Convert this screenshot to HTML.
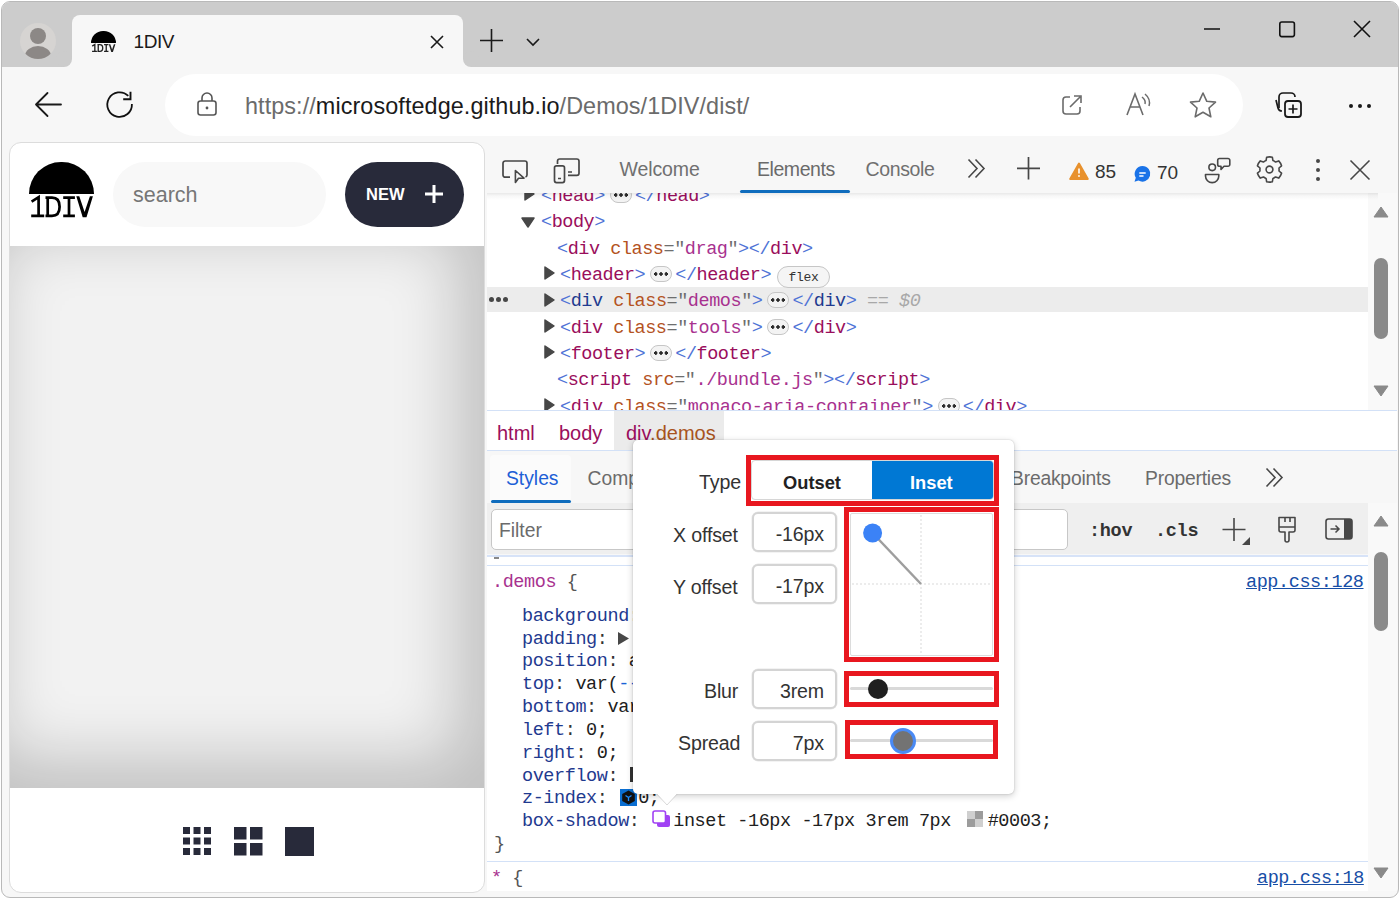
<!DOCTYPE html>
<html><head><meta charset="utf-8">
<style>
*{box-sizing:border-box;margin:0;padding:0}
html,body{width:1400px;height:899px;overflow:hidden;background:#fff;font-family:"Liberation Sans",sans-serif}
.a{position:absolute}
#win{position:absolute;left:1px;top:1px;width:1398px;height:897px;background:#f7f7f7;border:1px solid #b9b9b9;border-radius:9px;overflow:hidden}
#strip{position:absolute;left:0;top:0;width:1398px;height:65px;background:#cccccc}
.mono{font-family:"Liberation Mono",monospace}
svg{position:absolute;overflow:visible}

#dom>div{white-space:pre;height:26.35px}
.br{color:#4f73d6}.an{color:#b4531f}.eq{color:#6e6e6e}.av{color:#a8328f}
.ell{display:inline-block;width:22px;height:16px;margin:0 3px 0 5px;border:1px solid #c6c6c6;border-radius:8px;background:radial-gradient(circle at 4.8px 7px,#2b2b2b 1.5px,transparent 1.9px),radial-gradient(circle at 10px 7px,#2b2b2b 1.5px,transparent 1.9px),radial-gradient(circle at 15.2px 7px,#2b2b2b 1.5px,transparent 1.9px),#f3f3f3;vertical-align:-2px}
.flex{display:inline-block;width:53px;height:22px;text-align:center;font-size:13px;letter-spacing:-0.3px;line-height:21px;margin-left:6px;border:1.5px solid #c6c6c6;border-radius:11px;color:#333;vertical-align:-1px;background:#f5f5f5}

#css>div{white-space:pre;height:22.82px}
#css .p{padding-left:35px;color:#202020}
#css .pn{color:#1f3a8f}
#css .p .c{color:#333}

.inp{left:752px;width:85px;height:40px;border:2px solid #d4d4d4;border-radius:6px;background:#fff;font-size:19.6px;letter-spacing:-0.15px;color:#333;text-align:right;padding:9px 11px 0 0;box-shadow:0 0 0 0.5px #e8e8e8}
.red{border:5px solid #e8171f}
</style></head><body>
<div id="win">
  <div id="strip"></div>
</div>
<!-- absolute layer using page coords -->
<div class="a" style="left:0;top:0;width:1400px;height:899px">
  <!-- profile avatar -->
  <div class="a" style="left:20px;top:23px;width:36px;height:36px;border-radius:50%;background:#d6d4d2;overflow:hidden">
    <div class="a" style="left:10px;top:5px;width:16px;height:16px;border-radius:50%;background:#8c8886"></div>
    <div class="a" style="left:5px;top:23px;width:26px;height:20px;border-radius:50%;background:#8c8886"></div>
  </div>
  <!-- active tab -->
  <div class="a" style="left:72px;top:15px;width:391px;height:53px;background:#f7f7f7;border-radius:8px 8px 0 0"></div>
  <div class="a" style="left:64px;top:59px;width:8px;height:8px;background:#f7f7f7"></div>
  <div class="a" style="left:56px;top:51px;width:16px;height:16px;border-radius:50%;background:#cccccc"></div>
  <div class="a" style="left:463px;top:59px;width:8px;height:8px;background:#f7f7f7"></div>
  <div class="a" style="left:463px;top:51px;width:16px;height:16px;border-radius:50%;background:#cccccc"></div>
  <!-- favicon -->
  <div class="a" style="left:91px;top:31px;width:24.6px;height:12px;background:#000;border-radius:12.3px 12.3px 0 0"></div>
  <svg style="left:0;top:0" width="130" height="60"><g transform="translate(80.36,-27.83) scale(0.375,0.367)"><g stroke="#222" stroke-width="3.6" fill="none">
    <path d="M31.6 201.6L38.6 197.2V216.5M31.2 215.8H44.2"/>
    <path d="M45.5 197.6H52C57.8 197.6 59.6 201.5 59.6 206.7C59.6 211.8 57.8 215.8 52 215.8H45.5M47.7 197.6V215.8"/>
    <path d="M63.2 197.6H74.9M63.2 215.8H74.9M69 197.6V215.8"/>
  </g><path d="M75.8 196.3H79.8L84.6 211L89.4 196.3H93.4L86.8 217.2H82.4Z" fill="#222"/></g></svg>
  <div class="a" style="left:133.5px;top:30.5px;font-size:19px;letter-spacing:-0.4px;color:#1a1a1a">1DIV</div>
  <!-- tab close -->
  <svg style="left:430px;top:35px" width="14" height="14"><path d="M1 1L13 13M13 1L1 13" stroke="#1a1a1a" stroke-width="1.6"/></svg>
  <!-- new tab + -->
  <svg style="left:480px;top:29px" width="23" height="23"><path d="M11.5 0V23M0 11.5H23" stroke="#1a1a1a" stroke-width="1.6"/></svg>
  <svg style="left:526px;top:38px" width="14" height="9"><path d="M1 1L7 7L13 1" stroke="#1a1a1a" stroke-width="1.6" fill="none"/></svg>
  <!-- window controls -->
  <svg style="left:1204px;top:28px" width="17" height="2"><path d="M0 1H16" stroke="#111" stroke-width="1.5"/></svg>
  <svg style="left:1278px;top:20px" width="18" height="18"><rect x="1.8" y="2" width="14.6" height="14.6" rx="2" stroke="#111" stroke-width="1.6" fill="none"/></svg>
  <svg style="left:1353px;top:20px" width="19" height="19"><path d="M1 1L17 17M17 1L1 17" stroke="#111" stroke-width="1.6"/></svg>

  <!-- toolbar -->
  <svg style="left:35px;top:92px" width="27" height="25"><path d="M1 12.5H26M1 12.5L12.5 1M1 12.5L12.5 24" stroke="#1a1a1a" stroke-width="1.8" fill="none" stroke-linecap="round"/></svg>
  <svg style="left:100px;top:85px" width="40" height="40"><path d="M31.9 19A12.3 12.3 0 1 1 28.3 10.9" stroke="#111" stroke-width="1.8" fill="none"/><path d="M30.5 6.8V14.3H23.2" stroke="#111" stroke-width="1.9" fill="none"/></svg>
  <div class="a" style="left:165px;top:74px;width:1078px;height:62px;background:#fff;border-radius:31px"></div>
  <svg style="left:196px;top:91px" width="22" height="26"><path d="M6 10V7A5 5 0 0 1 16 7V10" stroke="#555" stroke-width="1.6" fill="none"/><rect x="2" y="10" width="18" height="14" rx="2.5" stroke="#555" stroke-width="1.6" fill="none"/><circle cx="11" cy="17" r="1.4" fill="#555"/></svg>
  <div class="a" style="left:245px;top:92.5px;font-size:23.4px;color:#1a1a1a;white-space:nowrap;letter-spacing:0.08px"><span style="color:#6b6b6b">https://</span>microsoftedge.github.io<span style="color:#6b6b6b">/Demos/1DIV/dist/</span></div>
  <!-- address icons -->
  <svg style="left:1061px;top:94px" width="22" height="22"><path d="M9 3H5A3 3 0 0 0 2 6V17A3 3 0 0 0 5 20H16A3 3 0 0 0 19 17V13" stroke="#6b6b6b" stroke-width="1.6" fill="none"/><path d="M9 13L19 3M13 2H20V9" stroke="#6b6b6b" stroke-width="1.6" fill="none"/></svg>
  <svg style="left:1125px;top:91px" width="28" height="26"><path d="M2 24L10 3L18 24M5.5 16H14.5" stroke="#6b6b6b" stroke-width="1.6" fill="none"/><path d="M17 6Q21 9 20 13M20 3Q26 8 24 15" stroke="#6b6b6b" stroke-width="1.5" fill="none"/></svg>
  <svg style="left:1188px;top:91px" width="30" height="28"><path d="M15 2L18.8 10.3L27.5 11.1L21 17L22.8 25.8L15 21.3L7.2 25.8L9 17L2.5 11.1L11.2 10.3Z" stroke="#6b6b6b" stroke-width="1.6" fill="none" stroke-linejoin="round"/></svg>
  <svg style="left:1274px;top:91px" width="30" height="29"><path d="M5 17V6A4 4 0 0 1 9 2H17A4 4 0 0 1 21 6" stroke="#1a1a1a" stroke-width="1.7" fill="none"/><path d="M2 9L4 17A4 4 0 0 0 8 20" stroke="#1a1a1a" stroke-width="1.7" fill="none"/><rect x="11" y="10" width="16" height="16" rx="3" stroke="#1a1a1a" stroke-width="1.8" fill="none"/><path d="M19 13.5V22.5M14.5 18H23.5" stroke="#1a1a1a" stroke-width="1.7"/></svg>
  <div class="a" style="left:1349px;top:104px;width:4px;height:4px;border-radius:2px;background:#1a1a1a"></div>
  <div class="a" style="left:1358px;top:104px;width:4px;height:4px;border-radius:2px;background:#1a1a1a"></div>
  <div class="a" style="left:1367px;top:104px;width:4px;height:4px;border-radius:2px;background:#1a1a1a"></div>

  <!-- PAGE PANEL -->
  <div class="a" style="left:9px;top:142px;width:476px;height:751px;background:#fff;border:1px solid #dcdcdc;border-radius:12px;overflow:hidden">
    <div class="a" style="left:-1px;top:103px;width:476px;height:542px;background:#f2f2f2;box-shadow:inset -20px -21px 64px 9px rgba(0,0,0,.2)"></div>
  </div>
  <div class="a" style="left:28.5px;top:161.5px;width:65px;height:32.5px;background:#000;border-radius:32.5px 32.5px 0 0"></div>
  <svg style="left:0;top:0" width="100" height="230"><g stroke="#000" stroke-width="2.7" fill="none" stroke-linecap="butt">
    <path d="M31.6 201.6L38.6 197.2V216.5M31.2 215.8H44.2"/>
    <path d="M45.5 197.6H52C57.8 197.6 59.6 201.5 59.6 206.7C59.6 211.8 57.8 215.8 52 215.8H45.5M47.7 197.6V215.8"/>
    <path d="M63.2 197.6H74.9M63.2 215.8H74.9M69 197.6V215.8"/>
  </g><path d="M76.3 196.3H79.3L84.6 212L89.9 196.3H92.9L86.5 217.2H82.7Z" fill="#000"/></svg>
  <div class="a" style="left:113px;top:162px;width:213px;height:65px;background:#f8f8f8;border-radius:33px"></div>
  <div class="a" style="left:133px;top:183px;font-size:21.5px;color:#767676">search</div>
  <div class="a" style="left:345px;top:162px;width:119px;height:65px;background:#282a3a;border-radius:33px"></div>
  <div class="a" style="left:366px;top:185px;font-size:16.5px;font-weight:bold;color:#fff">NEW</div>
  <svg style="left:425px;top:185px" width="18" height="18"><path d="M9 0V18M0 9H18" stroke="#fff" stroke-width="3"/></svg>
  <!-- grid icons -->
  <svg style="left:183px;top:827px" width="132" height="29">
    <g fill="#282a3a">
      <rect x="0" y="0" width="7" height="7"/><rect x="10.5" y="0" width="7" height="7"/><rect x="21" y="0" width="7" height="7"/>
      <rect x="0" y="10.5" width="7" height="7"/><rect x="10.5" y="10.5" width="7" height="7"/><rect x="21" y="10.5" width="7" height="7"/>
      <rect x="0" y="21" width="7" height="7"/><rect x="10.5" y="21" width="7" height="7"/><rect x="21" y="21" width="7" height="7"/>
      <rect x="51" y="0" width="12.5" height="12.5"/><rect x="67" y="0" width="12.5" height="12.5"/>
      <rect x="51" y="16" width="12.5" height="12.5"/><rect x="67" y="16" width="12.5" height="12.5"/>
      <rect x="102" y="0" width="29" height="29"/>
    </g>
  </svg>

  <!-- DEVTOOLS -->
  <div class="a" style="left:487px;top:193px;width:881px;height:218px;background:#fff"></div>
  <div class="a" style="left:1368px;top:193px;width:29px;height:218px;background:#f9f9f9"></div>
  <!-- DOM tree -->
  <div class="a" style="left:487px;top:287px;width:881px;height:25px;background:#ececec"></div>
  <div class="a mono" id="dom" style="left:487px;top:184px;width:881px;font-size:18.5px;letter-spacing:-0.45px;line-height:26.35px;color:#9a0e5c">
    <div style="padding-left:54px"><span class="br">&lt;</span>head<span class="br">&gt;</span><span class="ell"></span><span class="br">&lt;/</span>head<span class="br">&gt;</span></div>
    <div style="padding-left:54px"><span class="br">&lt;</span>body<span class="br">&gt;</span></div>
    <div style="padding-left:70px"><span class="br">&lt;</span>div <span class="an">class</span><span class="eq">="</span><span class="av">drag</span><span class="eq">"</span><span class="br">&gt;&lt;/</span>div<span class="br">&gt;</span></div>
    <div style="padding-left:73px"><span class="br">&lt;</span>header<span class="br">&gt;</span><span class="ell"></span><span class="br">&lt;/</span>header<span class="br">&gt;</span><span class="flex">flex</span></div>
    <div style="padding-left:73px"><span class="br">&lt;</span><span style="color:#1f3a8f">div</span> <span class="an">class</span><span class="eq">="</span><span class="av">demos</span><span class="eq">"</span><span class="br">&gt;</span><span class="ell"></span><span class="br">&lt;/</span><span style="color:#1f3a8f">div</span><span class="br">&gt;</span> <span style="color:#a8a8a8;font-style:italic">== $0</span></div>
    <div style="padding-left:73px"><span class="br">&lt;</span>div <span class="an">class</span><span class="eq">="</span><span class="av">tools</span><span class="eq">"</span><span class="br">&gt;</span><span class="ell"></span><span class="br">&lt;/</span>div<span class="br">&gt;</span></div>
    <div style="padding-left:73px"><span class="br">&lt;</span>footer<span class="br">&gt;</span><span class="ell"></span><span class="br">&lt;/</span>footer<span class="br">&gt;</span></div>
    <div style="padding-left:70px"><span class="br">&lt;</span>script <span class="an">src</span><span class="eq">="</span><span class="av">./bundle.js</span><span class="eq">"</span><span class="br">&gt;&lt;/</span>script<span class="br">&gt;</span></div>
    <div style="padding-left:73px"><span class="br">&lt;</span>div <span class="an">class</span><span class="eq">="</span><span class="av">monaco-aria-container</span><span class="eq">"</span><span class="br">&gt;</span><span class="ell"></span><span class="br">&lt;/</span>div<span class="br">&gt;</span></div>
  </div>
  <!-- triangles -->
  <svg style="left:524px;top:187px" width="11" height="14"><path d="M1 1V13L10 7Z" fill="#474747" stroke="#474747" stroke-width="1.5" stroke-linejoin="round"/></svg>
  <svg style="left:521px;top:216.5px" width="14" height="11"><path d="M1 1H13L7 10Z" fill="#474747" stroke="#474747" stroke-width="1.5" stroke-linejoin="round"/></svg>
  <svg style="left:543.5px;top:266.3px" width="11" height="14"><path d="M1 1V13L10 7Z" fill="#474747" stroke="#474747" stroke-width="1.5" stroke-linejoin="round"/></svg>
  <svg style="left:543.5px;top:292.7px" width="11" height="14"><path d="M1 1V13L10 7Z" fill="#474747" stroke="#474747" stroke-width="1.5" stroke-linejoin="round"/></svg>
  <svg style="left:543.5px;top:319px" width="11" height="14"><path d="M1 1V13L10 7Z" fill="#474747" stroke="#474747" stroke-width="1.5" stroke-linejoin="round"/></svg>
  <svg style="left:543.5px;top:345.3px" width="11" height="14"><path d="M1 1V13L10 7Z" fill="#474747" stroke="#474747" stroke-width="1.5" stroke-linejoin="round"/></svg>
  <svg style="left:543.5px;top:398px" width="11" height="14"><path d="M1 1V13L10 7Z" fill="#474747" stroke="#474747" stroke-width="1.5" stroke-linejoin="round"/></svg>
  <!-- selected row dots -->
  <div class="a" style="left:489px;top:297px;width:5px;height:5px;border-radius:50%;background:#474747"></div>
  <div class="a" style="left:496px;top:297px;width:5px;height:5px;border-radius:50%;background:#474747"></div>
  <div class="a" style="left:503px;top:297px;width:5px;height:5px;border-radius:50%;background:#474747"></div>
  <!-- dom scrollbar -->
  <svg style="left:1373px;top:206px" width="16" height="12"><path d="M1 11H15L8 1Z" fill="#8a8a8a" stroke="#8a8a8a" stroke-linejoin="round"/></svg>
  <div class="a" style="left:1374px;top:258px;width:14px;height:81px;border-radius:7px;background:#8a8a8a"></div>
  <svg style="left:1373px;top:385px" width="16" height="12"><path d="M1 1H15L8 11Z" fill="#8a8a8a" stroke="#8a8a8a" stroke-linejoin="round"/></svg>
  <div class="a" style="left:614px;top:411px;width:110px;height:4px;background:#e0e0e0"></div>

  <!-- devtools toolbar -->
  <div class="a" style="left:487px;top:142px;width:910px;height:51px;background:#f7f7f7"></div>
  <div class="a" style="left:487px;top:193px;width:891px;height:7px;background:linear-gradient(rgba(0,0,0,.09),rgba(0,0,0,.03) 40%,rgba(0,0,0,0))"></div>
  <svg style="left:502px;top:160px" width="27" height="24"><path d="M8 17.2H3.2A2.2 2.2 0 0 1 1 15V3.2A2.2 2.2 0 0 1 3.2 1H22.8A2.2 2.2 0 0 1 25 3.2V15A2.2 2.2 0 0 1 23.5 17" stroke="#474747" stroke-width="1.7" fill="none"/><path d="M13.4 10.5V22.5L16.5 18.2L22 18.2Z" stroke="#474747" stroke-width="1.6" fill="none" stroke-linejoin="round"/></svg>
  <svg style="left:553px;top:158px" width="28" height="26"><path d="M4.5 6V3.2A2.2 2.2 0 0 1 6.7 1H23.8A2.2 2.2 0 0 1 26 3.2V15.2A2.2 2.2 0 0 1 23.8 17.4H15" stroke="#474747" stroke-width="1.7" fill="none"/><rect x="1.5" y="7.8" width="10" height="16.8" rx="2" stroke="#474747" stroke-width="1.7" fill="none"/><path d="M5 20.5H8M15 14H19" stroke="#474747" stroke-width="1.6"/></svg>
  <div class="a" style="left:619.5px;top:157.5px;font-size:19.5px;letter-spacing:-0.1px;color:#707070">Welcome</div>
  <div class="a" style="left:757px;top:157.5px;font-size:19.5px;letter-spacing:-0.45px;color:#6a6a6a">Elements</div>
  <div class="a" style="left:740px;top:190px;width:110px;height:3px;background:#0f6cbd;border-radius:2px"></div>
  <div class="a" style="left:865.5px;top:157.5px;font-size:19.5px;letter-spacing:-0.35px;color:#707070">Console</div>
  <svg style="left:967px;top:158px" width="20" height="21"><path d="M1.5 1.5L10 10.5L1.5 19.5M8.5 1.5L17 10.5L8.5 19.5" stroke="#474747" stroke-width="1.6" fill="none"/></svg>
  <svg style="left:1017px;top:157px" width="23" height="23"><path d="M11.5 0V22.5M0 11.3H23" stroke="#474747" stroke-width="1.7"/></svg>
  <svg style="left:1069px;top:162px" width="20" height="19"><path d="M10 1.5L18.8 17H1.2Z" fill="#e8912d" stroke="#e8912d" stroke-width="2" stroke-linejoin="round"/><path d="M10 6.5V11.5" stroke="#fff" stroke-width="1.6"/><circle cx="10" cy="14" r="0.9" fill="#fff"/></svg>
  <div class="a" style="left:1095px;top:161px;font-size:19px;color:#333">85</div>
  <svg style="left:1133px;top:165px" width="19" height="18"><path d="M9.5 1A7.8 7.8 0 1 1 5.5 15.5L1.5 16.8L2.8 12.8A7.8 7.8 0 0 1 9.5 1Z" fill="#1a73e8"/><path d="M6.3 8H12.7M6.3 11H10.5" stroke="#fff" stroke-width="1.3"/></svg>
  <div class="a" style="left:1157px;top:162px;font-size:19px;color:#333">70</div>
  <svg style="left:1204px;top:157px" width="27" height="26"><circle cx="8.2" cy="10.3" r="3.3" stroke="#474747" stroke-width="1.6" fill="none"/><path d="M1.5 17.5H14.8V19A6.6 6.6 0 0 1 1.5 19Z" stroke="#474747" stroke-width="1.6" fill="none" stroke-linejoin="round"/><path d="M15.5 1.5H24A1.8 1.8 0 0 1 25.8 3.3V7.5A1.8 1.8 0 0 1 24 9.3H20L17 12.5V9.3H15.5A1.8 1.8 0 0 1 13.7 7.5V3.3A1.8 1.8 0 0 1 15.5 1.5Z" stroke="#474747" stroke-width="1.6" fill="none" stroke-linejoin="round"/></svg>
  <svg style="left:1254.5px;top:155px" width="29" height="29"><path d="M11.06 5.54L11.67 2.22A12.60 12.60 0 0 1 17.33 2.22L17.94 5.54A9.60 9.60 0 0 1 20.54 7.04L23.72 5.91A12.60 12.60 0 0 1 26.55 10.82L23.98 13.00A9.60 9.60 0 0 1 23.98 16.00L26.55 18.18A12.60 12.60 0 0 1 23.72 23.09L20.54 21.96A9.60 9.60 0 0 1 17.94 23.46L17.33 26.78A12.60 12.60 0 0 1 11.67 26.78L11.06 23.46A9.60 9.60 0 0 1 8.46 21.96L5.28 23.09A12.60 12.60 0 0 1 2.45 18.18L5.02 16.00A9.60 9.60 0 0 1 5.02 13.00L2.45 10.82A12.60 12.60 0 0 1 5.28 5.91L8.46 7.04A9.60 9.60 0 0 1 11.06 5.54 Z" stroke="#474747" stroke-width="1.6" fill="none" stroke-linejoin="round"/><circle cx="14.5" cy="14.5" r="3.4" stroke="#474747" stroke-width="1.6" fill="none"/></svg>
  <div class="a" style="left:1316px;top:159px;width:4px;height:4px;border-radius:50%;background:#474747"></div>
  <div class="a" style="left:1316px;top:168px;width:4px;height:4px;border-radius:50%;background:#474747"></div>
  <div class="a" style="left:1316px;top:177px;width:4px;height:4px;border-radius:50%;background:#474747"></div>
  <svg style="left:1350px;top:160px" width="20" height="20"><path d="M0.5 0.5L19.5 19.5M19.5 0.5L0.5 19.5" stroke="#474747" stroke-width="1.6"/></svg>

  <!-- breadcrumbs -->
  <div class="a" style="left:487px;top:410px;width:910px;height:1px;background:#d3e1f7"></div>
  <div class="a" style="left:487px;top:411px;width:910px;height:39px;background:#fff"></div>
  <div class="a" style="left:614px;top:411px;width:110px;height:39px;background:#ebebeb"></div>
  <div class="a" style="left:497px;top:421.5px;font-size:20px;color:#9a0e5c;white-space:nowrap">html</div>
  <div class="a" style="left:559px;top:421.5px;font-size:20px;color:#9a0e5c;white-space:nowrap">body</div>
  <div class="a" style="left:626px;top:421.5px;font-size:20px;color:#9a0e5c;white-space:nowrap">div<span style="color:#a8541e">.demos</span></div>
  <div class="a" style="left:487px;top:450px;width:910px;height:1px;background:#d3e1f7"></div>
  <!-- styles tabs -->
  <div class="a" style="left:487px;top:451px;width:910px;height:52px;background:#f7f7f7"></div>
  <div class="a" style="left:490px;top:455px;width:81px;height:48px;background:#fbfbfb;border-radius:4px 4px 0 0"></div>
  <div class="a" style="left:491px;top:500px;width:80px;height:3px;background:#0f6cbd;border-radius:2px"></div>
  <div class="a" style="left:506px;top:467.5px;font-size:19.3px;color:#1d5fd6">Styles</div>
  <div class="a" style="left:587.5px;top:467.5px;font-size:19.3px;color:#6b6b6b">Computed</div>
  <div class="a" style="left:1011px;top:468px;font-size:19.3px;letter-spacing:-0.2px;color:#6b6b6b">Breakpoints</div>
  <div class="a" style="left:1145px;top:468px;font-size:19.3px;letter-spacing:-0.2px;color:#6b6b6b">Properties</div>
  <svg style="left:1265px;top:467px" width="20" height="21"><path d="M1.5 1.5L10 10.5L1.5 19.5M8.5 1.5L17 10.5L8.5 19.5" stroke="#474747" stroke-width="1.6" fill="none"/></svg>
  <!-- filter bar -->
  <div class="a" style="left:487px;top:503px;width:881px;height:51px;background:#efefef"></div>
  <div class="a" style="left:491px;top:509px;width:577px;height:41px;background:#fff;border:1px solid #c7c7c7;border-radius:5px"></div>
  <div class="a" style="left:499px;top:520px;font-size:19.3px;color:#6b6b6b">Filter</div>
  <div class="a mono" style="left:1089px;top:520.5px;font-size:18.5px;letter-spacing:-0.3px;font-weight:bold;color:#333">:hov</div>
  <div class="a mono" style="left:1155px;top:520.5px;font-size:18.5px;letter-spacing:-0.3px;font-weight:bold;color:#333">.cls</div>
  <svg style="left:1222px;top:517px" width="30" height="29"><path d="M12 1V24M0.5 12.5H23.5" stroke="#474747" stroke-width="1.6"/><path d="M28 20V28H20Z" fill="#474747"/></svg>
  <svg style="left:1277px;top:516px" width="20" height="27"><path d="M2 1.5H18V14A2 2 0 0 1 16 16H12V24A2 2 0 0 1 8 24V16H4A2 2 0 0 1 2 14Z" stroke="#474747" stroke-width="1.6" fill="none" stroke-linejoin="round"/><path d="M2 11H18M8 1.5V6M13 1.5V6" stroke="#474747" stroke-width="1.6"/></svg>
  <svg style="left:1325px;top:518px" width="28" height="22"><rect x="1" y="1" width="26" height="20" rx="2.5" stroke="#474747" stroke-width="1.6" fill="none"/><path d="M19 1H24.5A2.5 2.5 0 0 1 27 3.5V18.5A2.5 2.5 0 0 1 24.5 21H19Z" fill="#474747"/><path d="M5.5 11H14M10.5 7.5L14 11L10.5 14.5" stroke="#474747" stroke-width="1.5" fill="none"/></svg>
  <div class="a" style="left:487px;top:555px;width:881px;height:336px;background:#fff"></div>
  <div class="a" style="left:487px;top:555px;width:881px;height:2px;background:#d7e3f8"></div>
  <div class="a" style="left:494px;top:557px;width:5px;height:1.5px;background:#888"></div>
  <div class="a" style="left:487px;top:565px;width:881px;height:1px;background:#d3e1f7"></div>
  <div class="a" style="left:487px;top:861px;width:881px;height:1px;background:#d3e1f7"></div>
  <div class="a" style="left:1368px;top:503px;width:29px;height:388px;background:#f9f9f9"></div>
  <svg style="left:1373px;top:515px" width="16" height="12"><path d="M1 11H15L8 1Z" fill="#8a8a8a" stroke="#8a8a8a" stroke-linejoin="round"/></svg>
  <div class="a" style="left:1374px;top:552px;width:14px;height:79px;border-radius:7px;background:#8a8a8a"></div>
  <svg style="left:1373px;top:867px" width="16" height="12"><path d="M1 1H15L8 11Z" fill="#8a8a8a" stroke="#8a8a8a" stroke-linejoin="round"/></svg>
  <!-- css rules -->
  <div class="a mono" id="css" style="left:487px;top:572px;width:881px;font-size:18.5px;letter-spacing:-0.42px;line-height:22.82px;color:#222">
    <div style="padding-left:5px"><span style="color:#a8328f">.demos</span> <span style="color:#555">{</span></div>
    <div style="height:11px"></div>
    <div class="p"><span class="pn">background</span><span class="c">:</span></div>
    <div class="p"><span class="pn">padding</span><span class="c">:</span> </div>
    <div class="p"><span class="pn">position</span><span class="c">:</span> a</div>
    <div class="p"><span class="pn">top</span><span class="c">:</span> var(<span style="color:#1a62d6">--</span></div>
    <div class="p"><span class="pn">bottom</span><span class="c">:</span> var</div>
    <div class="p"><span class="pn">left</span><span class="c">:</span> 0;</div>
    <div class="p"><span class="pn">right</span><span class="c">:</span> 0;</div>
    <div class="p"><span class="pn">overflow</span><span class="c">:</span> </div>
    <div class="p"><span class="pn">z-index</span><span class="c">:</span> <span style="display:inline-block;width:20px"></span>0;</div>
    <div class="p"><span class="pn">box-shadow</span><span class="c">:</span> <span style="display:inline-block;width:23px"></span>inset -16px -17px 3rem 7px <span style="display:inline-block;width:26px"></span>#0003;</div>
    <div style="padding-left:7px;color:#555">}</div>
  </div>
  <svg style="left:618px;top:632px" width="11" height="13"><path d="M0 0V13L11 6.5Z" fill="#474747"/></svg>
  <div class="a" style="left:630px;top:767px;width:3px;height:15px;background:#333"></div>
  <div class="a mono" style="left:1246px;top:572px;font-size:18.5px;letter-spacing:-0.42px;line-height:22.82px;color:#174ea6;text-decoration:underline">app.css:128</div>
  <div class="a mono" style="left:491px;top:868px;font-size:18.5px;letter-spacing:-0.42px;line-height:22.82px;color:#555"><span style="color:#a8328f">*</span> {</div>
  <div class="a mono" style="left:1257px;top:868px;font-size:18.5px;letter-spacing:-0.42px;line-height:22.82px;color:#174ea6;text-decoration:underline">app.css:18</div>
  <!-- z-index icon -->
  <svg style="left:620px;top:789px" width="17" height="17"><rect width="17" height="17" fill="#0a6ed1"/><path d="M8.5 1.5L14.8 5V12L8.5 15.5L2.2 12V5Z" fill="#111"/><path d="M8.5 8.5V12M8.5 8.5L5.5 6.5M8.5 8.5L11.5 6.5" stroke="#1a8cff" stroke-width="1.3"/></svg>
  <!-- box shadow icon -->
  <svg style="left:652px;top:810px" width="19" height="18"><rect x="5" y="5" width="13" height="12" rx="2" fill="#a142f4"/><rect x="1" y="1" width="12.5" height="12" rx="2" fill="#fff" stroke="#a142f4" stroke-width="1.6"/></svg>
  <!-- color swatch -->
  <svg style="left:967px;top:811px" width="16" height="16"><rect width="16" height="16" fill="#9c9c9c"/><rect width="8" height="8" fill="#cfcfcf"/><rect x="8" y="8" width="8" height="8" fill="#cfcfcf"/></svg>

  <!-- POPUP -->
  <div class="a" style="left:633px;top:440px;width:381px;height:354px;background:#fff;border-radius:5px;box-shadow:0 2px 7px rgba(0,0,0,.2),0 0 1.5px rgba(0,0,0,.25)"></div>
  <svg style="left:656px;top:793px" width="22" height="14"><path d="M0 0L11 12L22 0Z" fill="#fff"/><path d="M0 0L11 12L22 0" stroke="rgba(0,0,0,.15)" stroke-width="1" fill="none"/></svg>
  <div class="a" style="left:654px;top:790px;width:26px;height:4px;background:#fff"></div>
  <div class="a" style="left:699px;top:471px;font-size:19.6px;letter-spacing:-0.15px;color:#333">Type</div>
  <div class="a" style="left:751px;top:460px;width:243px;height:40px;border:1px solid #d6d6d6;border-radius:4px;background:#fff;overflow:hidden">
    <div class="a" style="left:120px;top:-1px;width:122px;height:40px;background:#0078d4"></div>
  </div>
  <div class="a" style="left:783px;top:472px;font-size:18.3px;font-weight:bold;color:#222">Outset</div>
  <div class="a" style="left:910px;top:472px;font-size:18.3px;font-weight:bold;color:#fff">Inset</div>
  <div class="a" style="left:673px;top:523.5px;font-size:19.6px;letter-spacing:-0.15px;color:#333">X offset</div>
  <div class="a" style="left:673px;top:575.5px;font-size:19.6px;letter-spacing:-0.15px;color:#333">Y offset</div>
  <div class="a" style="left:704px;top:679.5px;font-size:19.6px;letter-spacing:-0.15px;color:#333">Blur</div>
  <div class="a" style="left:678px;top:731.5px;font-size:19.6px;letter-spacing:-0.15px;color:#333">Spread</div>
  <div class="a inp" style="top:512px">-16px</div>
  <div class="a inp" style="top:564px">-17px</div>
  <div class="a inp" style="top:669px">3rem</div>
  <div class="a inp" style="top:721px">7px</div>
  <!-- pad -->
  <div class="a" style="left:850px;top:513px;width:143px;height:143px;border:1px solid #dcdcdc;border-radius:2px;background:#fff"></div>
  <svg style="left:850px;top:513px" width="143" height="143"><path d="M71 2V141M2 71H141" stroke="#e6e6e6" stroke-width="1.5" stroke-dasharray="2 2"/><path d="M22.6 20L71 71" stroke="#9e9e9e" stroke-width="2.5"/><circle cx="22.6" cy="20" r="9.5" fill="#3b82f6"/></svg>
  <!-- sliders -->
  <div class="a" style="left:850px;top:686.5px;width:143px;height:3px;background:#d9d9d9;border-radius:2px"></div>
  <div class="a" style="left:868px;top:678.5px;width:20px;height:20px;border-radius:50%;background:#1f1f1f"></div>
  <div class="a" style="left:850px;top:738.5px;width:143px;height:3px;background:#d9d9d9;border-radius:2px"></div>
  <div class="a" style="left:889.5px;top:727.5px;width:26px;height:26px;border-radius:50%;background:#737373;border:3.2px solid #4a8af4"></div>
  <!-- red highlight boxes -->
  <div class="a red" style="left:746px;top:455px;width:253px;height:51px"></div>
  <div class="a red" style="left:844px;top:507px;width:155px;height:155px"></div>
  <div class="a red" style="left:844px;top:671px;width:155px;height:36px"></div>
  <div class="a red" style="left:845px;top:720px;width:153px;height:39px"></div>
</div>
</body></html>
